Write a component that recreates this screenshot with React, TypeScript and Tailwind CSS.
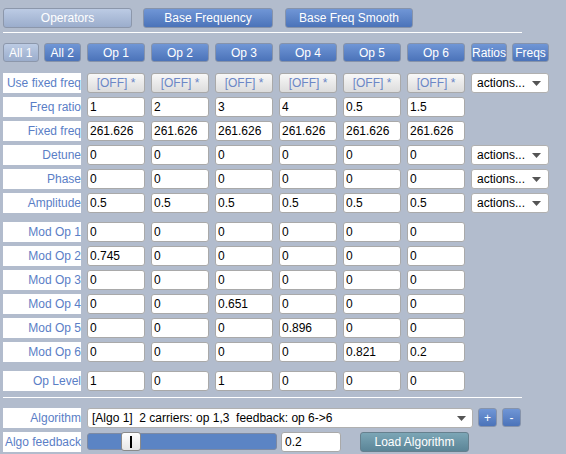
import React from 'react'

const blueBtn =
  'h-full rounded-[3px] border border-[#8693ab] bg-linear-to-b from-[#7096d6] to-[#4b73b9] text-white text-xs leading-none flex items-center justify-center'
const lightBtn =
  'h-full rounded-[3px] border border-[#8c97ab] bg-linear-to-b from-[#bccbe4] to-[#9badcc] text-white text-xs leading-none flex items-center justify-center'
const cellInput =
  'w-[58px] h-[20px] rounded-[3px] border border-[#a9a9a9] bg-white pl-[2px] text-xs text-black outline-none'

type Row = { label: string; values: string[]; actions?: boolean }

const topRows: Row[] = [
  { label: 'Freq ratio', values: ['1', '2', '3', '4', '0.5', '1.5'] },
  { label: 'Fixed freq', values: Array(6).fill('261.626') },
  { label: 'Detune', values: Array(6).fill('0'), actions: true },
  { label: 'Phase', values: Array(6).fill('0'), actions: true },
  { label: 'Amplitude', values: Array(6).fill('0.5'), actions: true },
]

const modRows: Row[] = [
  { label: 'Mod Op 1', values: ['0', '0', '0', '0', '0', '0'] },
  { label: 'Mod Op 2', values: ['0.745', '0', '0', '0', '0', '0'] },
  { label: 'Mod Op 3', values: ['0', '0', '0', '0', '0', '0'] },
  { label: 'Mod Op 4', values: ['0', '0', '0.651', '0', '0', '0'] },
  { label: 'Mod Op 5', values: ['0', '0', '0', '0.896', '0', '0'] },
  { label: 'Mod Op 6', values: ['0', '0', '0', '0', '0.821', '0.2'] },
]

function Label({ text }: { text: string }) {
  return (
    <div className="h-[20px] bg-white flex items-center justify-end overflow-hidden whitespace-nowrap text-xs text-[#5a7ec6]">
      {text}
    </div>
  )
}

function Actions() {
  return (
    <div className="h-[20px] rounded-[3px] border border-[#b0b0b0] bg-white flex items-center justify-between pl-[5px] pr-[7px] text-xs text-black">
      <span>actions...</span>
      <svg width="9" height="5" viewBox="0 0 9 5">
        <path d="M0 0 L9 0 L4.5 5 Z" fill="#555" />
      </svg>
    </div>
  )
}

function DataRow({ row }: { row: Row }) {
  return (
    <>
      <Label text={row.label} />
      {row.values.map((v, i) => (
        <input key={i} readOnly value={v} className={cellInput} />
      ))}
      {row.actions ? <Actions /> : <div />}
    </>
  )
}

const gridCls = 'grid grid-cols-[78px_repeat(6,58px)_78px] gap-x-[6px] gap-y-[4px]'

export default function App() {
  return (
    <div className="w-[566px] h-[454px] bg-[#b2bccd] pl-[3px] pt-[8px] font-['Liberation_Sans',Arial,sans-serif] overflow-hidden">
      {/* pestañas superiores */}
      <div className="flex h-[20px]">
        <button className={`${lightBtn} w-[129px]`}>Operators</button>
        <button className={`${blueBtn} w-[130px] ml-[11px]`}>Base Frequency</button>
        <button className={`${blueBtn} w-[128px] ml-[12px]`}>Base Freq Smooth</button>
      </div>
      <div className="mt-[4px] h-px w-[519px] bg-white" />

      {/* selector de operador */}
      <div className={`${gridCls} mt-[10px] h-[19px]`}>
        <div className="flex gap-[5px] h-[19px]">
          <button className={`${lightBtn} w-[36px]`}>All 1</button>
          <button className={`${blueBtn} w-[38px]`}>All 2</button>
        </div>
        {['Op 1', 'Op 2', 'Op 3', 'Op 4', 'Op 5', 'Op 6'].map(op => (
          <button key={op} className={`${blueBtn} h-[19px]`}>{op}</button>
        ))}
        <div className="flex gap-[5px] h-[19px]">
          <button className={`${blueBtn} w-[37px]`}>Ratios</button>
          <button className={`${blueBtn} w-[38px]`}>Freqs</button>
        </div>
      </div>

      {/* parámetros */}
      <div className={`${gridCls} mt-[11px]`}>
        <Label text="Use fixed freq" />
        {Array.from({ length: 6 }).map((_, i) => (
          <button
            key={i}
            className="h-[20px] rounded-[3px] border border-[#a9a9a9] bg-linear-to-b from-[#f8f8f8] to-[#dcdcdc] text-xs text-[#6c87c6]"
          >
            [OFF] *
          </button>
        ))}
        <Actions />
        {topRows.map(r => (
          <DataRow key={r.label} row={r} />
        ))}
      </div>

      <div className={`${gridCls} mt-[9px]`}>
        {modRows.map(r => (
          <DataRow key={r.label} row={r} />
        ))}
      </div>

      <div className={`${gridCls} mt-[9px]`}>
        <DataRow row={{ label: 'Op Level', values: ['1', '0', '1', '0', '0', '0'] }} />
      </div>

      <div className="mt-[6px] h-px w-[519px] bg-white" />

      {/* algoritmo */}
      <div className="flex mt-[10px] h-[19px] gap-[6px]">
        <div className="w-[78px]">
          <Label text="Algorithm" />
        </div>
        <div className="w-[386px] h-[20px] rounded-[3px] border border-[#b0b0b0] bg-white flex items-center justify-between pl-[4px] pr-[6px] text-xs text-black">
          <span className="whitespace-pre">[Algo 1]  2 carriers: op 1,3  feedback: op 6-&gt;6</span>
          <svg width="9" height="5" viewBox="0 0 9 5">
            <path d="M0 0 L9 0 L4.5 5 Z" fill="#555" />
          </svg>
        </div>
        <button className={`${blueBtn} w-[19px] h-[20px] ml-[-1px]`}>+</button>
        <button className={`${blueBtn} w-[19px] h-[20px] ml-[-1px]`}>-</button>
      </div>

      <div className="flex items-center mt-[5px] h-[19px]">
        <div className="w-[78px]">
          <Label text="Algo feedback" />
        </div>
        <div className="relative ml-[6px] w-[190px] h-[17px] rounded-[3px] border border-[#7d8aa3] bg-[#5b84c4]">
          <div className="absolute left-[33px] top-[-2px] w-[20px] h-[19px] rounded-[3px] border border-[#8a8a8a] bg-linear-to-b from-white to-[#e6e6e6] flex items-center justify-center">
            <div className="w-[2px] h-[12px] bg-black" />
          </div>
        </div>
        <input readOnly value="0.2" className="ml-[4px] w-[60px] h-[20px] rounded-[3px] border border-[#a9a9a9] bg-white pl-[3px] text-xs text-black outline-none" />
        <button className="ml-[19px] w-[109px] h-[20px] rounded-[3px] border border-[#66808e] bg-linear-to-b from-[#7ca6b6] to-[#5b8597] text-white text-xs">
          Load Algorithm
        </button>
      </div>
    </div>
  )
}
